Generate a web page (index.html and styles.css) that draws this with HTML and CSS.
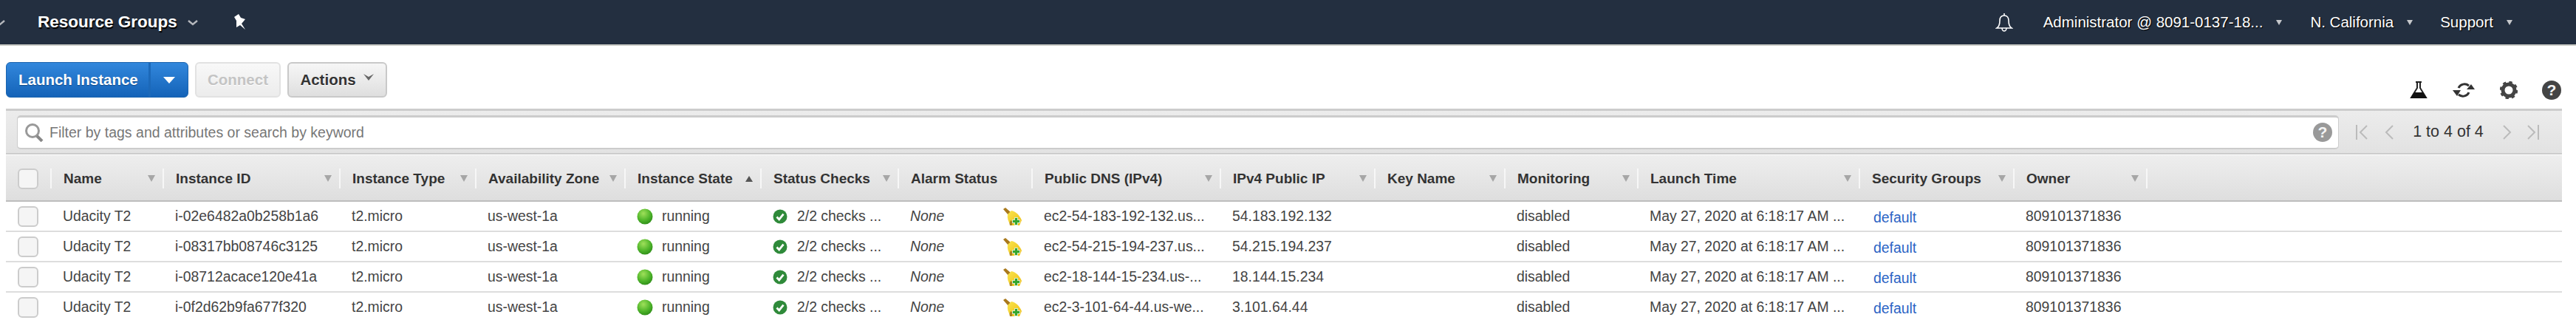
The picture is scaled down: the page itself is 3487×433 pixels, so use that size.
FILE: index.html
```html
<!DOCTYPE html>
<html>
<head>
<title>EC2 Instances</title>
<link rel="stylesheet" href="styles.css">
</head>
<body>
<svg class="defs">
  <defs>
    <radialGradient id="ball" cx="40%" cy="30%" r="75%">
      <stop offset="0" stop-color="#9fe05a"/>
      <stop offset="0.6" stop-color="#4fb52a"/>
      <stop offset="1" stop-color="#2c8a17"/>
    </radialGradient>
    <linearGradient id="brush" x1="0" y1="0" x2="1" y2="1">
      <stop offset="0" stop-color="#f9e54f"/>
      <stop offset="1" stop-color="#eebd10"/>
    </linearGradient>
    <symbol id="state" viewBox="0 0 22 22"><circle cx="11" cy="11" r="10.5" fill="url(#ball)"/></symbol>
    <symbol id="check" viewBox="0 0 20 20">
      <circle cx="10" cy="10" r="9.5" fill="#2f8a3a"/>
      <path d="M5.5 10.5l3.2 3.4 5.8-7.2" fill="none" stroke="#fff" stroke-width="2.8"/>
    </symbol>
    <symbol id="broom" viewBox="0 0 25 24">
      <path d="M0 2l3-2 7 6-3 4z" fill="#a9791c"/>
      <path d="M6 9l5-5c6 1 11 6 14 13l-3 7H10C7 19 5 14 6 9z" fill="url(#brush)"/>
      <path d="M9 24c-1-3 0-5 1-7l3 2-1 5z" fill="#a8841f"/>
      <path d="M15 13h5v3h3v5h-3v3h-5v-3h-3v-5h3z" fill="#d8e8c8"/>
      <path d="M16 14h3v3h3v3h-3v3h-3v-3h-3v-3h3z" fill="#35a62f"/>
    </symbol>
  </defs>
</svg>

<header class="topbar">
  <svg class="chev cut" viewBox="0 0 14 8"><path d="M1 1l6 5 6-5" /></svg>
  <a class="nav-main">Resource Groups</a>
  <svg class="chev" viewBox="0 0 14 8"><path d="M1 1l6 5 6-5" /></svg>
  <svg class="pin" viewBox="0 0 18 22"><path d="M1 4l6-4 3 5 6 2-5 6 5 8-7-6-5 3V9z" fill="#fff"/></svg>
  <div class="nav-right">
    <svg class="bell" viewBox="0 0 24 26"><path d="M12 1v3M12 4c-4 0-6 3-6 7 0 5-1 8-4 10h20c-3-2-4-5-4-10 0-4-2-7-6-7zM9 21c0 3 2 4 3 4s3-1 3-4" fill="none" stroke="#fff" stroke-width="1.6"/></svg>
    <a class="nav-item user">Administrator @ 8091-0137-18...<i class="tri"></i></a>
    <a class="nav-item region">N. California<i class="tri"></i></a>
    <a class="nav-item">Support<i class="tri"></i></a>
  </div>
</header>

<section class="toolbar">
  <div class="split">
    <span class="btn-main">Launch Instance</span>
    <span class="btn-drop"><i class="drop-tri"></i></span>
  </div>
  <span class="btn disabled">Connect</span>
  <span class="btn">Actions<svg class="btn-chev" viewBox="0 0 16 12"><path d="M1 1l7 9 7-9-7 4z" fill="#666"/></svg></span>
  <div class="tools">
    <svg class="tool" width="24" height="24" viewBox="0 0 24 24"><path d="M8 1h8M10 1v8L2 22h20L14 9V1" fill="none" stroke="#222" stroke-width="2"/><path d="M6 15h12l5 8H1z" fill="#111"/></svg>
    <svg class="tool" width="32" height="24" viewBox="0 0 32 24"><path d="M9 9c2-5 9-7 14-3" fill="none" stroke="#333" stroke-width="3"/><path d="M20 11h11l-5-7z" fill="#333"/><path d="M23 15c-2 5-9 7-14 3" fill="none" stroke="#333" stroke-width="3"/><path d="M1 12h11l-5 8z" fill="#333"/></svg>
    <svg class="tool" width="24" height="24" viewBox="0 0 24 24"><circle cx="12" cy="12" r="8" fill="none" stroke="#444" stroke-width="5"/><circle cx="12" cy="12" r="10.5" fill="none" stroke="#444" stroke-width="3.5" stroke-dasharray="4.2 4.05"/></svg>
    <span class="help dark">?</span>
  </div>
</section>

<section class="filter">
  <div class="search">
    <svg class="mag" viewBox="0 0 26 25"><circle cx="11" cy="10" r="8.5" fill="none" stroke="#999" stroke-width="3"/><path d="M17 17l7 7" stroke="#888" stroke-width="4"/></svg>
    <span class="placeholder">Filter by tags and attributes or search by keyword</span>
    <span class="help">?</span>
  </div>
  <div class="pager">
    <svg width="16" height="20" viewBox="0 0 16 20"><path d="M1 0v20M15 1L6 10l9 9" fill="none" stroke="#bbb" stroke-width="2"/></svg>
    <svg class="pg-prev" width="12" height="20" viewBox="0 0 12 20"><path d="M11 1L2 10l9 9" fill="none" stroke="#bbb" stroke-width="2"/></svg>
    <span class="pg-text">1 to 4 of 4</span>
    <svg class="pg-next" width="12" height="20" viewBox="0 0 12 20"><path d="M1 1l9 9-9 9" fill="none" stroke="#bbb" stroke-width="2"/></svg>
    <svg width="16" height="20" viewBox="0 0 16 20"><path d="M15 0v20M1 1l9 9-9 9" fill="none" stroke="#bbb" stroke-width="2"/></svg>
  </div>
</section>

<section class="grid">
  <div class="row head">
    <div class="th first"><span class="check-box"></span></div>
    <div class="th">Name<i class="sort"></i></div>
    <div class="th">Instance ID<i class="sort"></i></div>
    <div class="th">Instance Type<i class="sort"></i></div>
    <div class="th">Availability Zone<i class="sort"></i></div>
    <div class="th">Instance State<i class="sort up"></i></div>
    <div class="th">Status Checks<i class="sort"></i></div>
    <div class="th">Alarm Status</div>
    <div class="th">Public DNS (IPv4)<i class="sort"></i></div>
    <div class="th">IPv4 Public IP<i class="sort"></i></div>
    <div class="th">Key Name<i class="sort"></i></div>
    <div class="th">Monitoring<i class="sort"></i></div>
    <div class="th">Launch Time<i class="sort"></i></div>
    <div class="th">Security Groups<i class="sort"></i></div>
    <div class="th">Owner<i class="sort"></i></div>
  </div>

  <div class="row">
    <div class="td first"><span class="check-box"></span></div>
    <div class="td">Udacity T2</div>
    <div class="td">i-02e6482a0b258b1a6</div>
    <div class="td">t2.micro</div>
    <div class="td">us-west-1a</div>
    <div class="td"><svg class="ic-state"><use href="#state"/></svg>running</div>
    <div class="td"><svg class="ic-check"><use href="#check"/></svg>2/2 checks ...</div>
    <div class="td alarm"><em>None</em><svg class="ic-broom"><use href="#broom"/></svg></div>
    <div class="td">ec2-54-183-192-132.us...</div>
    <div class="td">54.183.192.132</div>
    <div class="td"></div>
    <div class="td">disabled</div>
    <div class="td">May 27, 2020 at 6:18:17 AM ...</div>
    <div class="td"><a class="link">default</a></div>
    <div class="td">809101371836</div>
  </div>

  <div class="row">
    <div class="td first"><span class="check-box"></span></div>
    <div class="td">Udacity T2</div>
    <div class="td">i-08317bb08746c3125</div>
    <div class="td">t2.micro</div>
    <div class="td">us-west-1a</div>
    <div class="td"><svg class="ic-state"><use href="#state"/></svg>running</div>
    <div class="td"><svg class="ic-check"><use href="#check"/></svg>2/2 checks ...</div>
    <div class="td alarm"><em>None</em><svg class="ic-broom"><use href="#broom"/></svg></div>
    <div class="td">ec2-54-215-194-237.us...</div>
    <div class="td">54.215.194.237</div>
    <div class="td"></div>
    <div class="td">disabled</div>
    <div class="td">May 27, 2020 at 6:18:17 AM ...</div>
    <div class="td"><a class="link">default</a></div>
    <div class="td">809101371836</div>
  </div>

  <div class="row">
    <div class="td first"><span class="check-box"></span></div>
    <div class="td">Udacity T2</div>
    <div class="td">i-08712acace120e41a</div>
    <div class="td">t2.micro</div>
    <div class="td">us-west-1a</div>
    <div class="td"><svg class="ic-state"><use href="#state"/></svg>running</div>
    <div class="td"><svg class="ic-check"><use href="#check"/></svg>2/2 checks ...</div>
    <div class="td alarm"><em>None</em><svg class="ic-broom"><use href="#broom"/></svg></div>
    <div class="td">ec2-18-144-15-234.us-...</div>
    <div class="td">18.144.15.234</div>
    <div class="td"></div>
    <div class="td">disabled</div>
    <div class="td">May 27, 2020 at 6:18:17 AM ...</div>
    <div class="td"><a class="link">default</a></div>
    <div class="td">809101371836</div>
  </div>

  <div class="row">
    <div class="td first"><span class="check-box"></span></div>
    <div class="td">Udacity T2</div>
    <div class="td">i-0f2d62b9fa677f320</div>
    <div class="td">t2.micro</div>
    <div class="td">us-west-1a</div>
    <div class="td"><svg class="ic-state"><use href="#state"/></svg>running</div>
    <div class="td"><svg class="ic-check"><use href="#check"/></svg>2/2 checks ...</div>
    <div class="td alarm"><em>None</em><svg class="ic-broom"><use href="#broom"/></svg></div>
    <div class="td">ec2-3-101-64-44.us-we...</div>
    <div class="td">3.101.64.44</div>
    <div class="td"></div>
    <div class="td">disabled</div>
    <div class="td">May 27, 2020 at 6:18:17 AM ...</div>
    <div class="td"><a class="link">default</a></div>
    <div class="td">809101371836</div>
  </div>
</section>
</body>
</html>
```

FILE: styles.css
```css
html, body {
    margin: 0;
    height: 433px;
    overflow: hidden;
    background: #fff;
    font-family: "Liberation Sans", Arial, sans-serif;
    color: #444;
}

.defs {
    display: block;
    width: 0;
    height: 0;
}

/* top nav */
.topbar {
    display: flex;
    align-items: center;
    height: 60px;
    background: #232f40;
    border-bottom: 2px solid #c9cac5;
    color: #fff;
}

.chev {
    width: 14px;
    height: 8px;
    margin: 2px 0 0 14px;
    fill: none;
    stroke: #b5b8bd;
    stroke-width: 2.4;
}

.chev.cut {
    margin: 2px 0 0 -7px;
}

.nav-main {
    margin-left: 44px;
    font-size: 22.5px;
    font-weight: bold;
    text-shadow: 1px 2px 1px #000;
}

.pin {
    width: 18px;
    height: 22px;
    margin-left: 48px;
}

.nav-right {
    display: flex;
    align-items: center;
    margin-left: auto;
    padding-right: 112px;
}

.bell {
    width: 24px;
    height: 26px;
    margin-right: 41px;
}

.nav-item {
    position: relative;
    font-size: 20.5px;
    text-shadow: 1px 1px 1px #000;
}

.nav-item.user {
    margin-right: 64px;
}

.nav-item.region {
    margin-right: 63px;
}

.tri {
    position: absolute;
    top: 9px;
    right: -26px;
    border-top: 7px solid #c6c8cb;
    border-left: 4.5px solid transparent;
    border-right: 4.5px solid transparent;
}

/* buttons row */
.toolbar {
    display: flex;
    align-items: flex-start;
    height: 63px;
    padding: 22px 20px 0 8px;
}

.split {
    display: flex;
    height: 48px;
    border: 1px solid #1a63ae;
    border-radius: 6px;
    box-sizing: border-box;
    width: 247px;
    background: linear-gradient(#3287dc, #1463b8);
    color: #fff;
    font-size: 20.5px;
    font-weight: bold;
    text-shadow: 0 1px 1px #0d4685;
}

.btn-main {
    display: flex;
    align-items: center;
    width: 195px;
    padding-left: 16px;
    box-sizing: border-box;
    border-right: 3px solid #1c69b9;
}

.btn-drop {
    display: flex;
    flex: 1;
    align-items: center;
    justify-content: center;
}

.drop-tri {
    border-top: 9px solid #fff;
    border-left: 8px solid transparent;
    border-right: 8px solid transparent;
}

.btn {
    display: flex;
    align-items: center;
    justify-content: center;
    box-sizing: border-box;
    width: 135px;
    height: 48px;
    margin-left: 9px;
    border: 2px solid #c9c9c9;
    border-radius: 6px;
    background: linear-gradient(#f6f6f6, #dfdfdf);
    color: #333;
    font-size: 20.5px;
    font-weight: bold;
    text-shadow: 0 1px 0 #fff;
}

.btn.disabled {
    width: 116px;
    border-color: #e2e2e2;
    background: linear-gradient(#f8f8f8, #ececec);
    color: #c4c4c4;
}

.btn-chev {
    width: 16px;
    height: 12px;
    margin: 0 0 6px 9px;
}

.tools {
    display: flex;
    align-items: center;
    margin-left: auto;
    margin-top: 26px;
    height: 24px;
}

.tool {
    margin-right: 33px;
}

.help {
    display: flex;
    align-items: center;
    justify-content: center;
    width: 26px;
    height: 26px;
    border-radius: 50%;
    background: #999;
    color: #f4f4f4;
    font-size: 21px;
    font-weight: bold;
}

.help.dark {
    background: #444;
}

/* filter bar */
.filter {
    display: flex;
    align-items: center;
    box-sizing: border-box;
    height: 62px;
    margin: 0 19px 1px 8px;
    border-top: 3px solid #ccc;
    border-bottom: 2px solid #ccc;
    background: linear-gradient(#ececec, #e2e2e2);
}

.search {
    display: flex;
    align-items: center;
    box-sizing: border-box;
    width: 3143px;
    height: 46px;
    margin-left: 15px;
    padding: 0 8px 0 9px;
    border: 1px solid #ccc;
    border-top: 3px solid #ccc;
    border-bottom: 2px solid #ccc;
    border-radius: 5px;
    background: #fff;
}

.mag {
    width: 26px;
    height: 25px;
}

.placeholder {
    flex: 1;
    margin-left: 8px;
    color: #777;
    font-size: 19.5px;
}

.pager {
    display: flex;
    align-items: center;
    margin-left: 23px;
}

.pg-prev {
    margin-left: 23px;
}

.pg-text {
    width: 148px;
    color: #333;
    font-size: 21.5px;
    text-align: center;
}

.pg-next {
    margin-right: 21px;
}

/* table */
.grid {
    margin: 0 19px 0 8px;
}

.row {
    display: grid;
    grid-template-columns: 62px 152px 239px 184px 202px 184px 186px 181px 255px 209px 176px 180px 300px 209px 180px 1fr;
    height: 41px;
    box-sizing: border-box;
    border-bottom: 2px solid #ddd;
    background: #fff;
}

.row.head {
    height: 63px;
    border-bottom: 2px solid #bdbdbd;
    background: linear-gradient(#eee, #dedede);
}

.th {
    display: flex;
    align-items: center;
    justify-content: space-between;
    box-sizing: border-box;
    height: 27px;
    margin-top: 18px;
    padding: 0 10px 0 16px;
    border-right: 2px solid #f7f7f7;
    color: #333;
    font-size: 19px;
    font-weight: bold;
    line-height: 24px;
    white-space: nowrap;
}

.sort {
    border-top: 9px solid #a6a6a6;
    border-left: 5px solid transparent;
    border-right: 5px solid transparent;
}

.sort.up {
    border-top: 0;
    border-bottom: 8px solid #555;
}

.td {
    display: flex;
    align-items: center;
    padding-left: 15px;
    font-size: 19.4px;
    white-space: nowrap;
}

.first {
    padding: 0 0 0 16px;
}

.check-box {
    display: block;
    box-sizing: border-box;
    width: 28px;
    height: 28px;
    border: 2px solid #ccc;
    border-radius: 6px;
    background: #f5f5f5;
}

.ic-state {
    width: 22px;
    height: 22px;
    margin-right: 12px;
}

.ic-check {
    width: 20px;
    height: 20px;
    margin-right: 13px;
}

.alarm em {
    width: 126px;
}

.ic-broom {
    width: 25px;
    height: 24px;
}

.link {
    margin: 3px 0 0 3px;
    color: #2a63c4;
}
```
